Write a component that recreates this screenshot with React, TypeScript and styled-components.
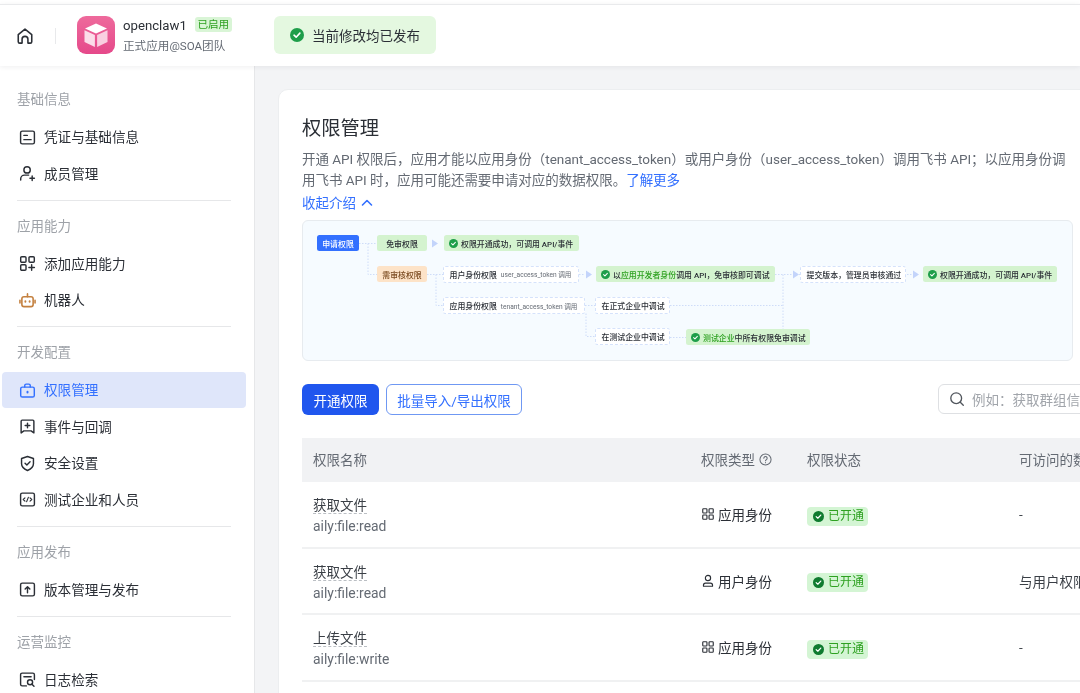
import React from "react";
import styled, { createGlobalStyle } from "styled-components";

const Global = createGlobalStyle`
  html, body { margin: 0; padding: 0; width: 1080px; height: 693px; overflow: hidden; background: #fff; }
  * { box-sizing: border-box; }
  body { font-family: Roboto, "Noto Sans CJK SC", sans-serif; color: #1f2329; }
`;

const Page = styled.div`
  width: 1080px; height: 693px; overflow: hidden; display: flex; flex-direction: column; background: #fff;
  padding-top: 4px; filter: blur(0.3px);
`;
const Header = styled.header`
  height: 62px; flex: none; display: flex; align-items: center; padding-left: 16px; padding-bottom: 2px; background: #fff;
  border-top: 1px solid #e9eaec; box-shadow: 0 1px 5px rgba(31,35,41,.07); position: relative; z-index: 1;
`;
const HomeSlot = styled.span`display: flex; color: #2b2f36; margin-top: 2px;`;
const HeaderRule = styled.span`width: 1px; height: 16px; background: #e8e9eb; margin: 2px 21px 0 21px;`;
const Logo = styled.span`
  width: 38px; height: 38px; border-radius: 9px; background: linear-gradient(180deg,#ee6a9c,#e5498a); display: flex; align-items: center; justify-content: center; margin-right: 8px;
`;
const AppText = styled.div`display: flex; flex-direction: column; width: 151px; margin-top: 2px;`;
const AppTop = styled.div`display: flex; align-items: center; gap: 8px; height: 20px;`;
const AppName = styled.span`font-size: 13.2px; line-height: 20px; color: #2b2f36;`;
const AppTag = styled.span`font-size: 10.6px; line-height: 15px; height: 15px; width: 37px; text-align: center; background: #d9f5d6; color: #2ea121; border-radius: 3px; margin-top: -3px;`;
const AppSub = styled.span`font-size: 11.6px; line-height: 18px; color: #646a73; margin-top: 1px;`;
const Banner = styled.div`
  width: 162px; height: 38px; background: #e4f8e0; border-radius: 6px; display: flex; align-items: center; gap: 8px; padding-left: 16px;
  font-size: 13.5px; color: #2b2f36;
`;
const Body = styled.div`flex: 1; display: flex; min-height: 0;`;
const Sidebar = styled.nav`
  width: 255px; flex: none; background: #fff; border-right: 1px solid #e6e7e9; padding: 16.25px 8px 0 2px; overflow: hidden;
`;
const SectionLabel = styled.div`height: 36.5px; line-height: 35.5px; padding-left: 15px; font-size: 13.5px; color: #9ea2a8;`;
const Item = styled.div<{ $active?: boolean }>`
  height: 36.5px; display: flex; align-items: center; gap: 8px; padding-left: 17px; font-size: 13.6px; border-radius: 4px;
  color: ${p => (p.$active ? "#3370ff" : "#2b2f36")};
  background: ${p => (p.$active ? "#dfe6fa" : "transparent")};
`;
const ItemText = styled.span`margin-top: -2px;`;
const NavRule = styled.div`height: 1px; background: #e6e7e9; margin: 8px 15px 8px 15px;`;
const Main = styled.main`flex: 1; background: #f3f4f6; padding: 23px 0 0 23px; overflow: hidden; min-width: 0;`;
const Card = styled.section`
  width: 900px; height: 700px; background: #fff; border-radius: 10px; border: 1px solid #eceef0; padding: 24px 23px 0 23px;
`;
const Title = styled.h1`margin: 0; font-size: 19.3px; font-weight: 400; line-height: 30px; color: #2b2f36;`;
const Desc = styled.p`margin: 5px 0 0; width: 771px; font-size: 13.5px; line-height: 21px; color: #646a73; letter-spacing: -0.02px;`;
const LinkText = styled.a`color: #3370ff; text-decoration: none;`;
const Collapse = styled.div`display: flex; align-items: center; gap: 5px; color: #3370ff; font-size: 13.5px; line-height: 20px; margin-top: 2px;`;
const Diagram = styled.div`
  position: relative; width: 771px; height: 141px; margin-top: 7px; background: #f6fbff; border: 1px solid #e7ebef; border-radius: 6px; overflow: hidden;
`;
const DiagramLines = styled.svg`position: absolute; left: -1px; top: -1px;`;
const Node = styled.div<{ $x: number; $y: number; $w: number; $kind: "blue" | "green" | "orange" | "white"; $center?: boolean }>`
  position: absolute; left: ${p => p.$x - 1}px; top: ${p => p.$y - 1}px; width: ${p => p.$w}px; height: ${p => (p.$kind === "white" ? 17 : 16)}px;
  display: flex; align-items: center; justify-content: ${p => (p.$center ? "center" : "flex-start")};
  gap: 3px; padding-left: ${p => (p.$center ? 0 : p.$kind === "white" ? 5.5 : 5)}px; border-radius: 2.5px; font-size: 7.9px; white-space: nowrap; font-weight: 500;
  color: ${p => (p.$kind === "blue" ? "#fff" : p.$kind === "orange" ? "#7a4a20" : "#2b2f36")};
  background: ${p => ({ blue: "#3370ff", green: "#d4f3cf", orange: "#fde3c8", white: "#fff" }[p.$kind])};
  border: ${p => (p.$kind === "white" ? "1px dashed #d5e2fb" : "none")};
`;
const NodeNote = styled.span`font-size: 6.6px; color: #646a73; font-weight: 400; margin-left: 1px;`;
const GreenWord = styled.span`color: #2ea121;`;
const Toolbar = styled.div`display: flex; align-items: flex-start; gap: 7px; margin-top: 23px; height: 31px;`;
const PrimaryButton = styled.button`
  flex: none; width: 77px; height: 31px; border: 0; border-radius: 6px; background: #2056ee; color: #fff; font: inherit; font-size: 13.5px; padding: 0;
`;
const OutlineButton = styled.button`
  flex: none; width: 136px; height: 31px; border: 1px solid #6f98f3; border-radius: 6px; background: #fff; color: #3370ff; font: inherit; font-size: 13.5px; padding: 0;
`;
const Search = styled.div`
  flex: none; margin-left: 409px; width: 220px; height: 30px; border: 1px solid #dee0e3; border-radius: 6px; display: flex; align-items: center; gap: 7px; padding-left: 10px;
  font-size: 13.5px; color: #a1a5ab; white-space: nowrap;
`;
const Table = styled.div`width: 860px; margin-top: 23px;`;
const Head = styled.div`
  display: grid; grid-template-columns: 399px 106px 212px 1fr; height: 44px; padding-bottom: 2px; background: #f1f2f4; align-items: center; font-size: 13.5px; color: #646a73;
`;
const Row = styled.div`
  display: grid; grid-template-columns: 399px 106px 212px 1fr; height: 66.5px; align-items: center; font-size: 13.5px; border-bottom: 2px solid #f0f1f2; color: #2b2f36;
`;
const NameCell = styled.div`padding-left: 11px;`;
const RowNameCell = styled(NameCell)`padding-top: 4px;`;
const HeadTypeCell = styled.div`display: flex; align-items: center; gap: 4px;`;
const PermName = styled.div`line-height: 21px;`;
const PermNameText = styled.span`border-bottom: 1px dashed #bbbfc4; color: #3a3f46;`;
const PermCode = styled.div`line-height: 21px; color: #646a73; font-size: 13.9px;`;
const TypeCell = styled.div`display: flex; align-items: center; gap: 3px; color: #2b2f36;`;
const StatusCell = styled.div`display: flex; padding-top: 4px;`;
const StatusTag = styled.span`
  display: inline-flex; align-items: center; gap: 4px; width: 61px; height: 19px; padding-left: 6px; border-radius: 4px; background: #d4f5d4; color: #2ea121; font-size: 12px; line-height: 19px;
`;
const DataCell = styled.div`white-space: nowrap; color: #3a3f46;`;

type IconProps = { size?: number; color?: string };
const Svg: React.FC<IconProps & { children: React.ReactNode; sw?: number }> = ({ size = 17, color = "currentColor", sw = 1.35, children }) => (
  <svg width={size} height={size} viewBox="0 0 16 16" fill="none" stroke={color} strokeWidth={sw} strokeLinecap="round" strokeLinejoin="round" style={{ flex: "none" }}>
    {children}
  </svg>
);
const IconCard = () => <Svg><rect x="1.5" y="2" width="13" height="12" rx="1.6" /><path d="M4.6 6h3.2M4.6 10h6.8" /></Svg>;
const IconUserPlus = () => <Svg><circle cx="7.6" cy="4.6" r="3" /><path d="M1.6 14.2v-1.3c0-1.9 1.6-3.4 3.5-3.4h4" /><path d="M12.4 10.4v4.2M10.3 12.5h4.2" /></Svg>;
const IconGridPlus = () => <Svg><rect x="1.6" y="1.6" width="5" height="5.2" rx="1" /><rect x="9.4" y="1.6" width="5" height="5.2" rx="1" /><rect x="1.6" y="9.2" width="5" height="5.2" rx="1" /><path d="M11.9 9.2v5.2M9.3 11.8h5.2" /></Svg>;
const IconRobot = () => <Svg color="#c4803f" sw={1.5}><rect x="2.7" y="4.4" width="10.6" height="9.4" rx="2" /><path d="M8 1.8v2.6M.9 7.8v2.6M15.1 7.8v2.6" /><path d="M6 8.6v.6M10 8.6v.6" strokeWidth="1.8" /></Svg>;
const IconBag = () => <Svg color="#3370ff"><rect x="1.6" y="4.8" width="12.8" height="9.4" rx="1.6" /><path d="M5.4 4.8V3.4c0-.8.6-1.4 1.4-1.4h2.4c.8 0 1.4.6 1.4 1.4v1.4" /><path d="M8 9.2v.6" strokeWidth="1.9" /></Svg>;
const IconEvent = () => <Svg><path d="M2 3c0-.6.4-1 1-1h10c.6 0 1 .4 1 1v11l-2.6-1.9H4.6L2 14z" /><path d="M8 4.8v4.4M5.8 7h4.4" /></Svg>;
const IconShield = () => <Svg><path d="M8 1.4l5.6 1.9v5c0 3-2.5 5-5.6 6.3-3.1-1.3-5.6-3.3-5.6-6.3v-5z" /><path d="M5.7 7.8l1.7 1.6 3-3" /></Svg>;
const IconCode = () => <Svg><rect x="1.5" y="2" width="13" height="12" rx="1.6" /><path d="M5.6 6.4L4 8l1.6 1.6M10.4 6.4L12 8l-1.6 1.6M8.8 6l-1.6 4" strokeWidth="1.1" /></Svg>;
const IconUpload = () => <Svg><rect x="1.5" y="2" width="13" height="12" rx="1.6" /><path d="M8 11V5.6M5.8 7.6L8 5.4l2.2 2.2" /></Svg>;
const IconLog = () => <Svg><path d="M7 14H3c-.8 0-1.5-.7-1.5-1.5v-9C1.5 2.7 2.2 2 3 2h10c.8 0 1.5.7 1.5 1.5V8" /><path d="M4.6 5.4h6.8" /><circle cx="10.4" cy="10.6" r="2.4" /><path d="M12.2 12.4l1.9 1.9" /></Svg>;
const IconHome = () => <Svg size={18} sw={1.4}><path d="M2 6.8L8 1.9l6 4.9V13c0 .8-.6 1.3-1.3 1.3h-2.1v-3.5c0-1.4-1.1-2.5-2.6-2.5s-2.6 1.1-2.6 2.5v3.5H3.3C2.6 14.3 2 13.8 2 13z" /></Svg>;
const IconApp = () => <Svg size={14} sw={1.3}><rect x="2" y="2" width="4.8" height="4.8" rx=".9" /><rect x="9.2" y="2" width="4.8" height="4.8" rx=".9" /><rect x="2" y="9.2" width="4.8" height="4.8" rx=".9" /><rect x="9.2" y="9.2" width="4.8" height="4.8" rx=".9" /></Svg>;
const IconUser = () => <Svg size={14} sw={1.3}><circle cx="8" cy="4.6" r="3" /><path d="M2.8 14v-1.2c0-1.4 1-2.4 2.4-2.4h5.6c1.4 0 2.4 1 2.4 2.4V14z" /></Svg>;
const CheckDot: React.FC<{ size: number; color: string }> = ({ size, color }) => (
  <svg width={size} height={size} viewBox="0 0 16 16" style={{ flex: "none" }}>
    <circle cx="8" cy="8" r="8" fill={color} />
    <path d="M4.6 8.2l2.4 2.3 4.3-4.6" fill="none" stroke="#fff" strokeWidth="1.8" strokeLinecap="round" strokeLinejoin="round" />
  </svg>
);
const CubeLogo = () => (
  <svg width="26" height="26" viewBox="0 0 26 26">
    <path d="M13 1.5l11 5-11 5-11-5z" fill="#fff" />
    <path d="M1.5 8.2l10.4 4.8v12L1.5 20z" fill="#fbdde9" />
    <path d="M24.5 8.2L14.1 13v12l10.4-5z" fill="#f9cfe0" />
  </svg>
);

const Lines = () => (
  <DiagramLines width="771" height="141" fill="none">
    <g stroke="#cfdcf8" strokeWidth="1" strokeDasharray="1.5 1.5">
      <path d="M57 23.5h18M66 23.5v31h9M125 54.5h16M134 54.5v31h7M277 54.5h6M284 93.5v23h9M283 85.5h10M368 85.5h113M368 117.5h16M473 54.5h25M481 54.5v55M508 117.5h-27" />
      <path d="M605 54.5h6" />
    </g>
    <g fill="#c3d4fb">
      <path d="M130 19.5l6 4-6 4zM284 50.5l6 4-6 4zM491 50.5l6 4-6 4zM611 50.5l6 4-6 4z" />
    </g>
  </DiagramLines>
);

const nav = [
  { label: "基础信息", items: [{ t: "凭证与基础信息", i: <IconCard /> }, { t: "成员管理", i: <IconUserPlus /> }] },
  { label: "应用能力", items: [{ t: "添加应用能力", i: <IconGridPlus /> }, { t: "机器人", i: <IconRobot /> }] },
  { label: "开发配置", items: [{ t: "权限管理", i: <IconBag />, active: true }, { t: "事件与回调", i: <IconEvent /> }, { t: "安全设置", i: <IconShield /> }, { t: "测试企业和人员", i: <IconCode /> }] },
  { label: "应用发布", items: [{ t: "版本管理与发布", i: <IconUpload /> }] },
  { label: "运营监控", items: [{ t: "日志检索", i: <IconLog /> }] },
];

const rows = [
  { n: "获取文件", c: "aily:file:read", user: false, d: "-" },
  { n: "获取文件", c: "aily:file:read", user: true, d: "与用户权限范围一致" },
  { n: "上传文件", c: "aily:file:write", user: false, d: "-" },
];

export default function App() {
  return (
    <Page>
      <Global />
      <Header>
        <HomeSlot><IconHome /></HomeSlot>
        <HeaderRule />
        <Logo><CubeLogo /></Logo>
        <AppText>
          <AppTop><AppName>openclaw1</AppName><AppTag>已启用</AppTag></AppTop>
          <AppSub>正式应用@SOA团队</AppSub>
        </AppText>
        <Banner><CheckDot size={14} color="#1e9e4a" />当前修改均已发布</Banner>
      </Header>
      <Body>
        <Sidebar>
          {nav.map((s, i) => (
            <React.Fragment key={s.label}>
              {i > 0 && <NavRule />}
              <SectionLabel>{s.label}</SectionLabel>
              {s.items.map(it => (
                <Item key={it.t} $active={(it as { active?: boolean }).active}>{it.i}<ItemText>{it.t}</ItemText></Item>
              ))}
            </React.Fragment>
          ))}
        </Sidebar>
        <Main>
          <Card>
            <Title>权限管理</Title>
            <Desc>
              开通 API 权限后，应用才能以应用身份（tenant_access_token）或用户身份（user_access_token）调用飞书 API；以应用身份调用飞书 API 时，应用可能还需要申请对应的数据权限。<LinkText>了解更多</LinkText>
            </Desc>
            <Collapse>收起介绍
              <svg width="12" height="12" viewBox="0 0 12 12" fill="none" stroke="#3370ff" strokeWidth="1.6" strokeLinecap="round" strokeLinejoin="round"><path d="M1.5 8L6 3.5 10.5 8" /></svg>
            </Collapse>
            <Diagram>
              <Lines />
              <Node $kind="blue" $center $x={15} $y={15} $w={42}>申请权限</Node>
              <Node $kind="green" $center $x={75} $y={15} $w={50}>免审权限</Node>
              <Node $kind="green" $x={142} $y={15} $w={135}><CheckDot size={9} color="#1e9e4a" />权限开通成功，可调用 API/事件</Node>
              <Node $kind="orange" $center $x={75} $y={46} $w={50}>需审核权限</Node>
              <Node $kind="white" $x={141} $y={45.5} $w={136}>用户身份权限<NodeNote>user_access_token 调用</NodeNote></Node>
              <Node $kind="green" $x={294} $y={46} $w={179}><CheckDot size={9} color="#1e9e4a" /><span>以<GreenWord>应用开发者身份</GreenWord>调用 API，免审核即可调试</span></Node>
              <Node $kind="white" $x={498} $y={45.5} $w={106}>提交版本，管理员审核通过</Node>
              <Node $kind="green" $x={621} $y={46} $w={134}><CheckDot size={9} color="#1e9e4a" />权限开通成功，可调用 API/事件</Node>
              <Node $kind="white" $x={141} $y={77} $w={142}>应用身份权限<NodeNote>tenant_access_token 调用</NodeNote></Node>
              <Node $kind="white" $x={293} $y={77} $w={75}>在正式企业中调试</Node>
              <Node $kind="white" $x={293} $y={108} $w={75}>在测试企业中调试</Node>
              <Node $kind="green" $x={384} $y={109} $w={124}><CheckDot size={9} color="#1e9e4a" /><span><GreenWord>测试企业</GreenWord>中所有权限免审调试</span></Node>
            </Diagram>
            <Toolbar>
              <PrimaryButton>开通权限</PrimaryButton>
              <OutlineButton>批量导入/导出权限</OutlineButton>
              <Search>
                <svg width="16" height="16" viewBox="0 0 16 16" fill="none" stroke="#51565d" strokeWidth="1.35" strokeLinecap="round"><circle cx="7.2" cy="7.2" r="5.4" /><path d="M11.3 11.3l3 3" /></svg>
                例如：获取群组信息
              </Search>
            </Toolbar>
            <Table>
              <Head>
                <NameCell>权限名称</NameCell>
                <HeadTypeCell>权限类型
                  <svg width="13" height="13" viewBox="0 0 14 14" fill="none" stroke="#646a73" strokeWidth="1.1" strokeLinecap="round"><circle cx="7" cy="7" r="6" /><path d="M5.2 5.6a1.8 1.8 0 1 1 2.7 1.6c-.6.3-.9.7-.9 1.2" /><path d="M7 10.2v.2" /></svg>
                </HeadTypeCell>
                <div>权限状态</div>
                <div>可访问的数据范围</div>
              </Head>
              {rows.map((r, i) => (
                <Row key={i}>
                  <RowNameCell>
                    <PermName><PermNameText>{r.n}</PermNameText></PermName>
                    <PermCode>{r.c}</PermCode>
                  </RowNameCell>
                  <TypeCell>{r.user ? <IconUser /> : <IconApp />}{r.user ? "用户身份" : "应用身份"}</TypeCell>
                  <StatusCell><StatusTag><CheckDot size={11} color="#0f7b2f" />已开通</StatusTag></StatusCell>
                  <DataCell>{r.d}</DataCell>
                </Row>
              ))}
            </Table>
          </Card>
        </Main>
      </Body>
    </Page>
  );
}
